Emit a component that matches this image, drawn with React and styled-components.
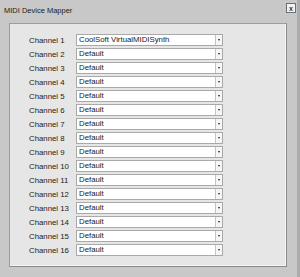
import React from 'react';
import styled, { createGlobalStyle } from 'styled-components';

const GlobalStyle = createGlobalStyle`
  html, body {
    margin: 0;
    padding: 0;
    background: #c8c8c8;
  }
  * {
    box-sizing: border-box;
  }
`;

const Window = styled.div`
  width: 300px;
  height: 277px;
  background: #c8c8c8;
  border-right: 3px solid #ababab;
  display: flex;
  flex-direction: column;
  font-family: "Liberation Sans", Arial, sans-serif;
  color: #1e1e1e;
`;

const TitleBar = styled.div`
  height: 23px;
  display: flex;
  justify-content: space-between;
  align-items: flex-start;
  padding-left: 4px;
`;

const Title = styled.div`
  margin-top: 6px;
  font-size: 7.5px;
  line-height: 9px;
  color: #222;
`;

const CloseButton = styled.div`
  margin-top: 3px;
  margin-right: 1px;
  width: 10px;
  height: 10px;
  border: 1px solid #6e6e6e;
  background: #f2f2f2;
  display: flex;
  align-items: center;
  justify-content: center;
  font-size: 7px;
  line-height: 7px;
  font-weight: bold;
  color: #333;
`;

const Panel = styled.div`
  flex: 1;
  margin: 0 10px 10px 9px;
  background: #e6e6e6;
  border: 1px solid #9c9c9c;
  border-right-color: #8a8a8a;
  border-bottom-color: #8a8a8a;
  box-shadow: inset -1px -1px 0 #f4f4f4;
  padding: 10px 0 0 19px;
`;

const Rows = styled.div`
  display: grid;
  grid-template-columns: 47px 147px;
  row-gap: 2px;
`;

const Label = styled.div`
  font-size: 7.8px;
  line-height: 12px;
  height: 12px;
  padding-top: 1px;
  color: #222;
`;

const Select = styled.div`
  height: 12px;
  display: flex;
  background: #ffffff;
  border: 1px solid #a9a9a9;
`;

const Value = styled.div`
  flex: 1;
  font-size: 7.8px;
  line-height: 10px;
  padding-left: 2px;
  color: #1a1a1a;
  white-space: nowrap;
  overflow: hidden;
`;

const ArrowBox = styled.div`
  width: 7px;
  border-left: 1px solid #c4c4c4;
  background: #f6f6f6;
  display: flex;
  align-items: center;
  justify-content: center;

  &::after {
    content: "";
    border-left: 1.5px solid transparent;
    border-right: 1.5px solid transparent;
    border-top: 2px solid #222;
  }
`;

const channels = Array.from({ length: 16 }, (_, i) => ({
  name: `Channel ${i + 1}`,
  device: i === 0 ? 'CoolSoft VirtualMIDISynth' : 'Default',
}));

const App = () => {
  return (
    <Window>
      <GlobalStyle />
      <TitleBar>
        <Title>MIDI Device Mapper</Title>
        <CloseButton>x</CloseButton>
      </TitleBar>
      <Panel>
        <Rows>
          {channels.map((c) => (
            <React.Fragment key={c.name}>
              <Label>{c.name}</Label>
              <Select>
                <Value>{c.device}</Value>
                <ArrowBox />
              </Select>
            </React.Fragment>
          ))}
        </Rows>
      </Panel>
    </Window>
  );
};

export default App;
